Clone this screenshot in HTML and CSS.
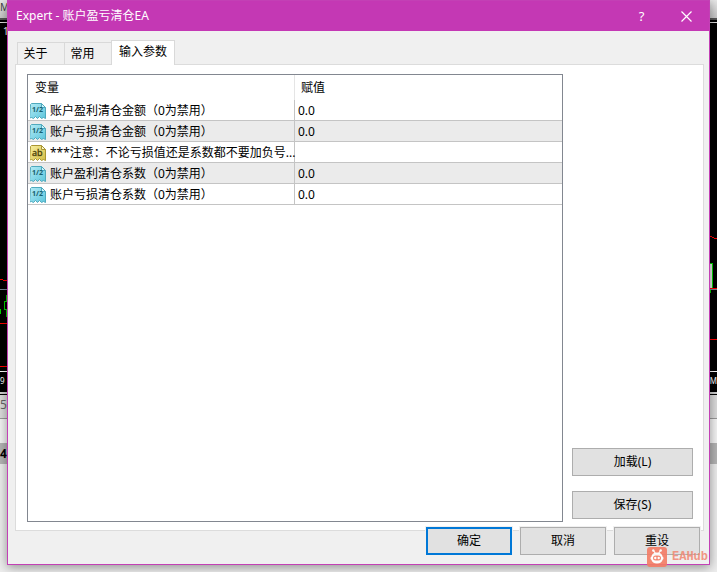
FILE: index.html
```
<!DOCTYPE html>
<html lang="zh-CN">
  <head>
    <meta charset="UTF-8" />
    <meta name="viewport" content="width=device-width, initial-scale=1.0" />
    <title>Expert - 账户盈亏清仓EA</title>
    <link rel="stylesheet" href="styles.css">
  </head>
  <body>
    <!-- terminal window behind the dialog -->
    <div class="terminal">
      <div class="toolbar">M</div>
      <div class="chart">
        <svg width="8" height="348" viewBox="0 0 8 348" shape-rendering="crispEdges">
          <text x="3" y="12" font-size="10" fill="#fff">1</text>
          <path d="M0 256.5h3M3 257.5h5M0 300.5h8M0 343.5h8" stroke="#f00" fill="none" />
          <path d="M0 266.5h8" stroke="#778899" />
          <path d="M0.5 286v5M7 272.5h-1v6h-2v8h2v7h1" stroke="#00d800" fill="none" />
        </svg>
        <svg width="8" height="348" viewBox="0 0 8 348" shape-rendering="crispEdges">
          <path d="M0 213.5h3M3 214.5h2M5 215.5h3M0 316.5h8" stroke="#f00" fill="none" />
          <path d="M0 240.5h3v25H1v4" stroke="#00d800" fill="#e6e6e6" />
          <path d="M0 266.5h8" stroke="#778899" />
          <path d="M0 265.5h8" stroke="#f00" />
        </svg>
      </div>
      <div class="timeline"><span>9</span><span>M</span></div>
      <div class="chart-tabs">5</div>
      <div class="blank"></div>
      <div class="order">4</div>
    </div>

    <div class="dialog">
      <div class="titlebar">
        <h1 class="title">Expert - 账户盈亏清仓EA</h1>
        <button class="title-btn" aria-label="帮助">?</button>
        <button class="title-btn" aria-label="关闭">
          <svg width="11" height="11" viewBox="0 0 11 11">
            <path d="M0.5 0.5l10 10M10.5 0.5l-10 10" stroke="#fff" stroke-width="1.2" />
          </svg>
        </button>
      </div>

      <div class="content">
        <div class="tabs">
          <button class="tab">关于</button>
          <button class="tab">常用</button>
          <button class="tab active">输入参数</button>
        </div>

        <div class="panel">
          <div class="list">
            <table>
              <thead>
                <tr>
                  <th class="name">变量</th>
                  <th>赋值</th>
                </tr>
              </thead>
              <tbody>
                <tr>
                  <td><div class="cell"><svg class="icon"><use href="#num" /></svg>账户盈利清仓金额（0为禁用）</div></td>
                  <td>0.0</td>
                </tr>
                <tr>
                  <td><div class="cell"><svg class="icon"><use href="#num" /></svg>账户亏损清仓金额（0为禁用）</div></td>
                  <td>0.0</td>
                </tr>
                <tr>
                  <td><div class="cell"><svg class="icon"><use href="#str" /></svg>***注意：不论亏损值还是系数都不要加负号...</div></td>
                  <td></td>
                </tr>
                <tr>
                  <td><div class="cell"><svg class="icon"><use href="#num" /></svg>账户盈利清仓系数（0为禁用）</div></td>
                  <td>0.0</td>
                </tr>
                <tr>
                  <td><div class="cell"><svg class="icon"><use href="#num" /></svg>账户亏损清仓系数（0为禁用）</div></td>
                  <td>0.0</td>
                </tr>
              </tbody>
            </table>
          </div>
          <div class="side">
            <button class="btn">加载(L)</button>
            <button class="btn">保存(S)</button>
          </div>
        </div>

        <div class="footer">
          <button class="btn primary">确定</button>
          <button class="btn">取消</button>
          <button class="btn">重设</button>
        </div>
      </div>
    </div>

    <div class="watermark">
      <svg width="20" height="20" viewBox="0 0 20 20">
        <rect width="20" height="20" rx="3" fill="#f47c65" />
        <path d="M6.5 3.5l2 3M13.5 3.5l-2 3" stroke="#fff" stroke-width="1.2" />
        <circle cx="6.3" cy="3.5" r="1.2" fill="#fff" />
        <circle cx="13.7" cy="3.5" r="1.2" fill="#fff" />
        <path d="M10 5.5c3.5 0 5.3 2 5.6 4.2 1.2.2 1.2 2.8 0 3-.5 2.3-2.4 3.8-5.600 3.8s-5.100-1.500-5.600-3.800c-1.200-.2-1.200-2.800 0-3C4.700 7.500 6.500 5.500 10 5.500z" fill="#fff" />
        <rect x="6" y="8.5" width="8" height="5" rx="2.5" fill="#f47c65" />
        <circle cx="8.3" cy="11" r="1.2" fill="#fff" />
        <circle cx="11.7" cy="11" r="1.2" fill="#fff" />
      </svg>
      <span>EAHub</span>
    </div>

    <!-- parameter type icons -->
    <svg class="defs">
      <defs>
        <linearGradient id="blue" x1="0" y1="0" x2="1" y2="1">
          <stop offset="0" stop-color="#b5ecf6" />
          <stop offset="1" stop-color="#5cc5dc" />
        </linearGradient>
        <linearGradient id="yellow" x1="0" y1="0" x2="1" y2="1">
          <stop offset="0" stop-color="#f8efa0" />
          <stop offset="1" stop-color="#d3bd45" />
        </linearGradient>
        <symbol id="num" viewBox="0 0 16 16">
          <path d="M0.5 1.5l1-1h10l4 4v11l-2-1-2 1-2-2-2 2-2-2-2 2-2-1-2 0.5z" fill="url(#blue)" stroke="#4fa9bd" />
          <path d="M11.5 0.5v4h4z" fill="#d3f4fa" stroke="#4fa9bd" />
          <text x="2" y="9" font-size="7" font-weight="bold" fill="#17606f">1/2</text>
        </symbol>
        <symbol id="str" viewBox="0 0 16 16">
          <path d="M0.5 1.5l1-1h10l4 4v11l-2-1-2 1-2-2-2 2-2-2-2 2-2-1-2 0.5z" fill="url(#yellow)" stroke="#a99532" />
          <path d="M11.5 0.5v4h4z" fill="#fbf6c8" stroke="#a99532" />
          <text x="2" y="11" font-size="9" fill="#4a3f08" stroke="#4a3f08" stroke-width="0.3">ab</text>
        </symbol>
      </defs>
    </svg>
  </body>
</html>
```
FILE: styles.css
```
* {
  box-sizing: border-box;
}
body {
  margin: 0;
  font-family: "Noto Sans", "Noto Sans CJK SC", sans-serif;
  font-size: 12px;
  line-height: 16px;
  color: #000;
  background-color: #ededed;
  height: 100vh;
  overflow: hidden;
}
button {
  font: inherit;
  color: inherit;
  margin: 0;
  padding: 0;
}

/* terminal */
.terminal {
  position: absolute;
  inset: 0;
}
.toolbar {
  height: 20px;
  background: linear-gradient(#e8e8e8, #c8c8c8);
  border-bottom: 2px solid #555;
  font-size: 10px;
  line-height: 14px;
  color: #444;
}
.chart {
  height: 352px;
  display: flex;
  justify-content: space-between;
  padding-top: 1px;
  background-color: #000;
  border-top: 2px solid #000;
  border-bottom: 1px solid #fff;
  box-shadow: inset 0 1px #ddd;
}
.timeline {
  height: 20px;
  display: flex;
  justify-content: space-between;
  background-color: #000;
  color: #fff;
  font-size: 8px;
  line-height: 18px;
}
.chart-tabs {
  height: 27px;
  border-top: 2px solid #d0d0d0;
  border-bottom: 1px solid #999;
  box-shadow: inset 0 1px #000;
  background-color: #dcdcdc;
  color: #666;
  line-height: 22px;
}
.blank {
  height: 24px;
  background-color: #f4f4f4;
}
.order {
  height: 21px;
  background-color: #b4b4b4;
  font-weight: bold;
  line-height: 21px;
}

/* dialog */
.dialog {
  position: relative;
  display: flex;
  flex-direction: column;
  height: calc(100vh - 7px);
  margin: 0 7px;
  background-color: #f0f0f0;
  border: 1px solid #c340b5;
  box-shadow: 0 2px 10px rgba(0, 0, 0, 0.4);
}
.titlebar {
  display: flex;
  align-items: center;
  height: 30px;
  padding-left: 8px;
  background-color: #c438b4;
  color: #fff;
}
.title {
  flex: 1;
  margin: 0;
  font-size: 12px;
  font-weight: normal;
}
.title-btn {
  display: flex;
  align-items: center;
  justify-content: center;
  width: 45px;
  height: 30px;
  border: none;
  background: none;
  font-size: 13px;
}
.content {
  flex: 1;
  display: flex;
  flex-direction: column;
  padding: 9px 5px 9px 7px;
}

.tabs {
  display: flex;
  align-items: flex-end;
  height: 24px;
  padding-left: 2px;
}
.tab {
  height: 22px;
  width: 47px;
  padding-right: 11px;
  border: 1px solid #d9d9d9;
  border-right: none;
  border-bottom: none;
  background-color: #f0f0f0;
}
.tab.active {
  position: relative;
  width: 64px;
  height: 25px;
  margin-bottom: -1px;
  padding: 0 0 2px;
  border-right: 1px solid #d9d9d9;
  background-color: #fff;
}

.panel {
  flex: 1;
  display: flex;
  gap: 9px;
  padding: 9px 10px 8px 11px;
  background-color: #fff;
  border: 1px solid #dcdcdc;
}
.list {
  flex: 1;
  min-width: 0;
  border: 1px solid #828790;
}
table {
  width: 100%;
  table-layout: fixed;
  border-spacing: 0;
}
th {
  height: 25px;
  padding: 0 6px;
  font-weight: normal;
  text-align: left;
}
th.name {
  width: 50%;
  padding-left: 7px;
  border-right: 1px solid #e5e5e5;
}
td {
  height: 21px;
  padding: 2px 3px 0;
  border-bottom: 1px solid #c4c4c4;
}
td:first-child {
  padding: 2px 0 0 2px;
  border-right: 1px solid #c4c4c4;
}
tbody tr:nth-child(even) {
  background-color: #ebebeb;
}
.cell {
  display: flex;
  align-items: center;
  gap: 4px;
  white-space: nowrap;
}
.icon {
  flex: none;
  width: 16px;
  height: 16px;
}
.defs {
  position: absolute;
  width: 0;
  height: 0;
}

.side {
  display: flex;
  flex-direction: column;
  justify-content: flex-end;
  gap: 15px;
  padding-bottom: 3px;
}
.btn {
  width: 86px;
  height: 28px;
  border: 1px solid #adadad;
  background-color: #e1e1e1;
}
.side .btn {
  width: 121px;
}
.btn.primary {
  border: 2px solid #0078d7;
}
.footer {
  position: relative;
  display: flex;
  justify-content: flex-end;
  gap: 8px;
  margin-top: -4px;
  padding-right: 4px;
}
.footer .btn {
  box-shadow: 0 0 0 1px #f0f0f0;
}

.watermark {
  position: absolute;
  right: 9px;
  bottom: 5px;
  display: flex;
  align-items: center;
  gap: 5px;
  font-family: "Liberation Mono", monospace;
  font-size: 12px;
  font-weight: bold;
  color: #f08c78;
  opacity: 0.9;
}
```
